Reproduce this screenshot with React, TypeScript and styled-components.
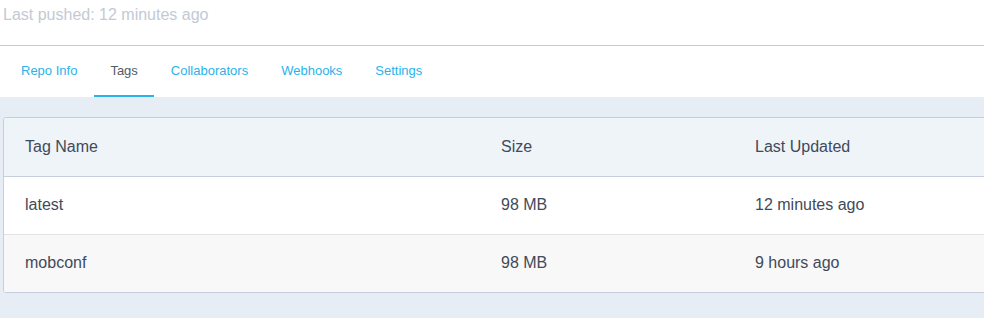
import styled, { createGlobalStyle } from 'styled-components';

const GlobalStyle = createGlobalStyle`
  body {
    margin: 0;
    font-family: "Liberation Sans", Arial, sans-serif;
    background: #e6edf5;
    overflow-x: hidden;
  }
`;

const Header = styled.header`
  background: #fff;
  height: 45px;
  border-bottom: 1px solid #c6cbd2;
`;

const Pushed = styled.div`
  padding-left: 3px;
  line-height: 29px;
  font-size: 16px;
  color: #c3cad5;
`;

const Nav = styled.nav`
  display: flex;
  height: 51px;
  padding-left: 4.5px;
  background: #fff;
`;

const Tab = styled.a<{ $active?: boolean }>`
  display: flex;
  align-items: center;
  padding: 0 16.5px;
  font-size: 13px;
  color: ${(p) => (p.$active ? '#555b63' : '#2ab3ea')};
  border-bottom: 2px solid ${(p) => (p.$active ? '#2ab3ea' : 'transparent')};
  box-sizing: border-box;
  cursor: pointer;
`;

const Content = styled.main`
  padding: 20px 0 25px 3px;
`;

const Card = styled.div`
  width: 1010px;
  border: 1px solid #c6cfdb;
  border-radius: 3px;
  overflow: hidden;
  background: #fff;
`;

const Row = styled.div<{ $kind: 'head' | 'even' | 'odd' }>`
  display: grid;
  grid-template-columns: 476px 254px 1fr;
  height: 57px;
  align-items: center;
  font-size: 16px;
  color: #3f4a5a;
  background: ${(p) =>
    p.$kind === 'head' ? '#eff4f9' : p.$kind === 'odd' ? '#f8f8f8' : '#fff'};
  border-top: 1px solid
    ${(p) => (p.$kind === 'even' ? '#c6cfdb' : p.$kind === 'odd' ? '#e0e2e5' : 'transparent')};
  ${(p) => p.$kind === 'head' && 'height: 58px; border-top: none;'}
`;

const Cell = styled.div`
  padding-left: 21px;
  padding-bottom: 1px;
`;

const tags = [
  { name: 'latest', size: '98 MB', updated: '12 minutes ago' },
  { name: 'mobconf', size: '98 MB', updated: '9 hours ago' },
];

export default function App() {
  return (
    <>
      <GlobalStyle />
      <Header>
        <Pushed>Last pushed: 12 minutes ago</Pushed>
      </Header>
      <Nav>
        <Tab>Repo Info</Tab>
        <Tab $active>Tags</Tab>
        <Tab>Collaborators</Tab>
        <Tab>Webhooks</Tab>
        <Tab>Settings</Tab>
      </Nav>
      <Content>
        <Card>
          <Row $kind="head">
            <Cell>Tag Name</Cell>
            <Cell>Size</Cell>
            <Cell>Last Updated</Cell>
          </Row>
          {tags.map((t, i) => (
            <Row key={t.name} $kind={i % 2 ? 'odd' : 'even'}>
              <Cell>{t.name}</Cell>
              <Cell>{t.size}</Cell>
              <Cell>{t.updated}</Cell>
            </Row>
          ))}
        </Card>
      </Content>
    </>
  );
}
